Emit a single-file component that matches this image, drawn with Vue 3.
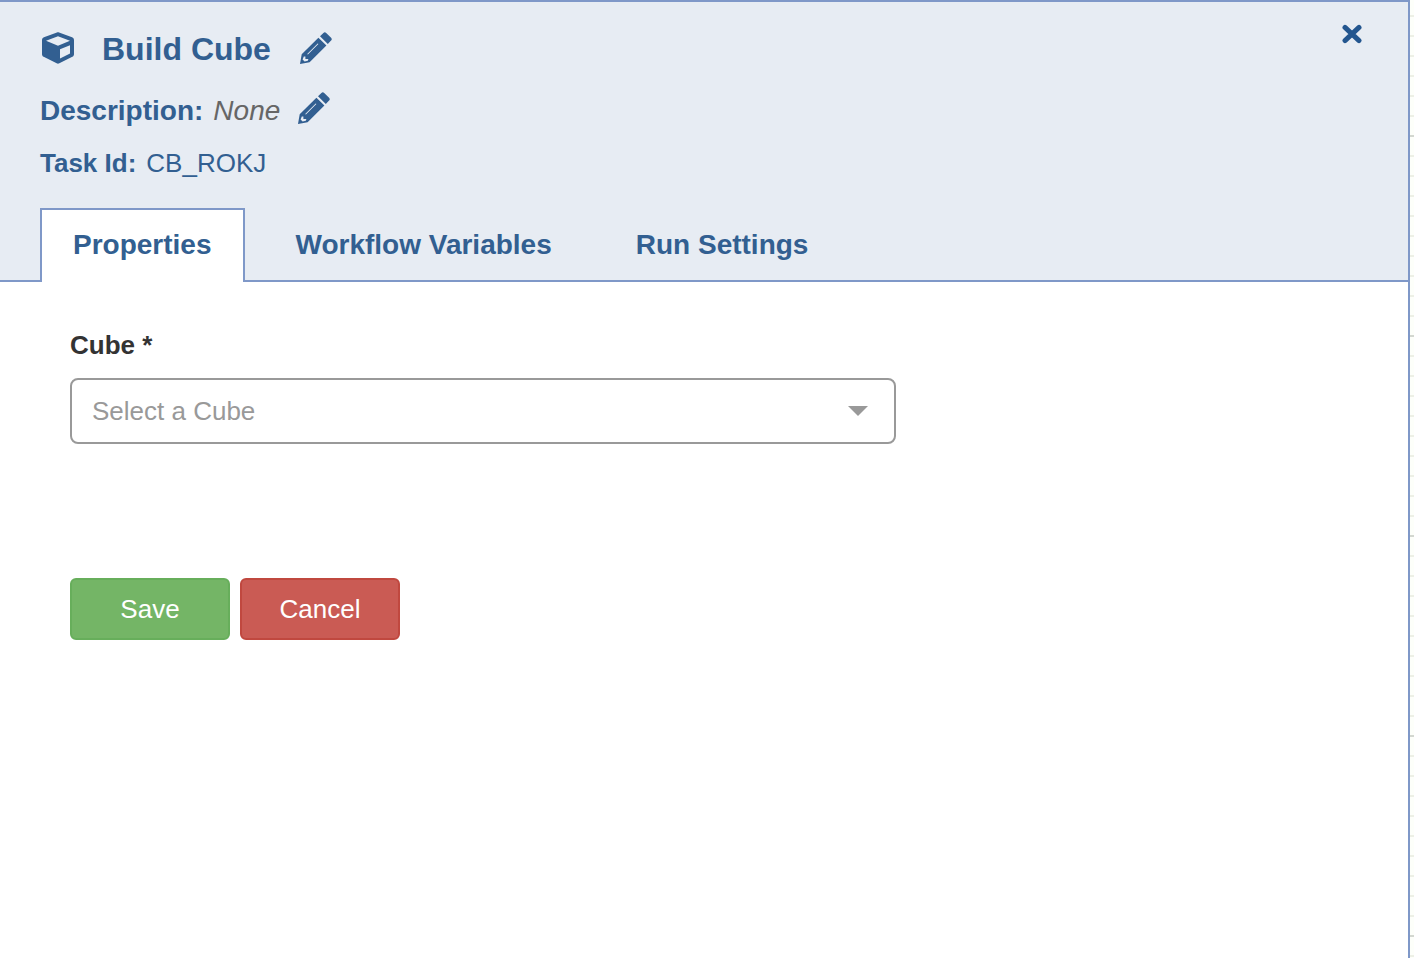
<script setup>
import { ref } from 'vue'

const tabs = ['Properties', 'Workflow Variables', 'Run Settings']
const activeTab = ref('Properties')
const cube = ref('')

const pencil =
  'M20 4.3L23.4 .9Q24.8-.4 26.2 .9L31.1 5.8Q32.4 7.2 31.1 8.6L27.8 11.9zM18.4 5.8L26.4 13.6L9.6 30.2L0 32L1.7 22.2zM17.7 11.4L7.2 21.9L7.9 22.6L18.4 12.1zM3.8 24.6L2.6 27.6L4.6 29.5L7.8 28.7L8.4 26.9H5.4V24.6z'
</script>

<template>
  <div class="workspace">
    <main class="panel">
      <header class="header">
        <div class="heading">
          <div class="info">
            <div class="row title-row">
              <svg class="cube" viewBox="0 0 512 512" aria-hidden="true">
                <path d="M239.1 6.3l-208 78c-18.7 7-31.1 25-31.1 45v225.1c0 18.2 10.3 34.8 26.5 42.9l208 104c13.5 6.8 29.4 6.8 42.9 0l208-104c16.3-8.1 26.5-24.8 26.5-42.9V129.3c0-20-12.4-37.9-31.1-44.9l-208-78C262 2.2 250 2.2 239.1 6.3zM256 68.4l192 72v1.1l-192 78-192-78v-1.1l192-72zm32 356V275.5l160-65v133.9l-160 80z" />
              </svg>
              <h1>Build Cube</h1>
              <button class="icon-button edit-title" type="button" aria-label="Edit name">
                <svg viewBox="0 0 32 32" aria-hidden="true"><path :d="pencil" /></svg>
              </button>
            </div>
            <div class="row description-row">
              <strong>Description:</strong>
              <em>None</em>
              <button class="icon-button edit-description" type="button" aria-label="Edit description">
                <svg viewBox="0 0 32 32" aria-hidden="true"><path :d="pencil" /></svg>
              </button>
            </div>
            <div class="row task-row">
              <strong>Task Id:</strong>
              <span>CB_ROKJ</span>
            </div>
          </div>
          <button class="icon-button close" type="button" aria-label="Close">
            <svg viewBox="0 0 20 20" aria-hidden="true">
              <path d="M3 3.4L17 16.6M17 3.4L3 16.6" />
            </svg>
          </button>
        </div>
        <div class="tabs" role="tablist">
          <button
            v-for="tab in tabs"
            :key="tab"
            type="button"
            role="tab"
            class="tab"
            :class="{ active: tab === activeTab }"
            :aria-selected="tab === activeTab"
            @click="activeTab = tab"
          >{{ tab }}</button>
        </div>
      </header>

      <form class="form" @submit.prevent>
        <label for="cube-select">Cube *</label>
        <div class="select-box">
          <select id="cube-select" v-model="cube">
            <option value="" disabled>Select a Cube</option>
          </select>
          <svg class="caret" viewBox="0 0 20 10" aria-hidden="true"><path d="M0 0h20L10 10z" /></svg>
        </div>
        <div class="actions">
          <button class="save" type="submit">Save</button>
          <button class="cancel" type="button">Cancel</button>
        </div>
      </form>
    </main>
    <div class="canvas" aria-hidden="true"></div>
  </div>
</template>

<style>
body {
  margin: 0;
}
</style>

<style scoped>
.workspace {
  display: flex;
  min-height: 100vh;
  font-family: "Liberation Sans", Helvetica, Arial, sans-serif;
  font-size: 26px;
  color: #325f91;
}

.workspace * {
  box-sizing: border-box;
}

button,
select {
  font: inherit;
}

.panel {
  flex: 1;
  min-width: 0;
  background: #fff;
  border-top: 2px solid #7f98c8;
  border-right: 2px solid #7f98c8;
}

.canvas {
  width: 4px;
  background:
    repeating-linear-gradient(transparent 0 135px, #d3d7d0 135px 137px, transparent 137px 200px),
    repeating-linear-gradient(transparent 0 15px, #edf0e6 15px 17px, transparent 17px 20px),
    #fdfffa;
}

.header {
  background: #e7ecf3;
  border-bottom: 2px solid #7f98c8;
}

.heading {
  display: flex;
  justify-content: space-between;
  padding: 20px 46px 24px 40px;
}

.row {
  display: flex;
  align-items: center;
}

.title-row {
  height: 52px;
}

.cube {
  width: 32px;
  height: 32px;
  margin: 0 28px 0 2px;
  fill: currentColor;
}

h1 {
  margin: 2px 0 0;
  font-size: 32px;
  line-height: 40px;
}

.icon-button {
  padding: 0;
  border: 0;
  background: none;
  color: inherit;
  cursor: pointer;
}

.icon-button svg {
  display: block;
  width: 32px;
  height: 32px;
  fill: currentColor;
  fill-rule: evenodd;
}

.edit-title {
  margin-left: 29px;
}

.description-row {
  gap: 10px;
  height: 68px;
  font-size: 28px;
}

.description-row strong,
.description-row em {
  margin-top: 6px;
}

.description-row em {
  color: #666;
}

.edit-description {
  margin-left: 8px;
}

.task-row {
  gap: 10px;
  height: 42px;
}

.close {
  align-self: flex-start;
  margin-top: 2px;
  color: #23568f;
}

.close svg {
  width: 20px;
  height: 20px;
  fill: none;
  stroke: currentColor;
  stroke-width: 5;
  stroke-linecap: round;
}

.tabs {
  display: flex;
  gap: 18px;
  margin-bottom: -2px;
  padding: 0 40px;
}

.tab {
  height: 74px;
  padding: 0 31px 2px;
  border: 2px solid transparent;
  border-bottom: 0;
  background: none;
  color: inherit;
  font-size: 28px;
  font-weight: bold;
  cursor: pointer;
}

.tab.active {
  border-color: #7f98c8;
  background: #fff;
}

.form {
  padding: 48px 70px;
}

label {
  display: block;
  color: #333;
  font-weight: bold;
  line-height: 30px;
}

.select-box {
  position: relative;
  max-width: 826px;
  margin-top: 18px;
}

select {
  display: block;
  width: 100%;
  height: 66px;
  padding: 0 60px 0 20px;
  border: 2px solid #999;
  border-radius: 8px;
  background: #fff;
  color: #999;
  appearance: none;
}

.caret {
  position: absolute;
  top: 28px;
  right: 28px;
  width: 20px;
  height: 10px;
  fill: #999;
  pointer-events: none;
}

.actions {
  display: flex;
  gap: 10px;
  margin-top: 134px;
}

.actions button {
  width: 160px;
  height: 62px;
  padding: 0;
  border: 2px solid;
  border-radius: 6px;
  color: #fff;
  cursor: pointer;
}

.actions .save {
  border-color: #67ae5b;
  background: #74b566;
}

.actions .cancel {
  border-color: #c0483f;
  background: #ca5b54;
}
</style>
